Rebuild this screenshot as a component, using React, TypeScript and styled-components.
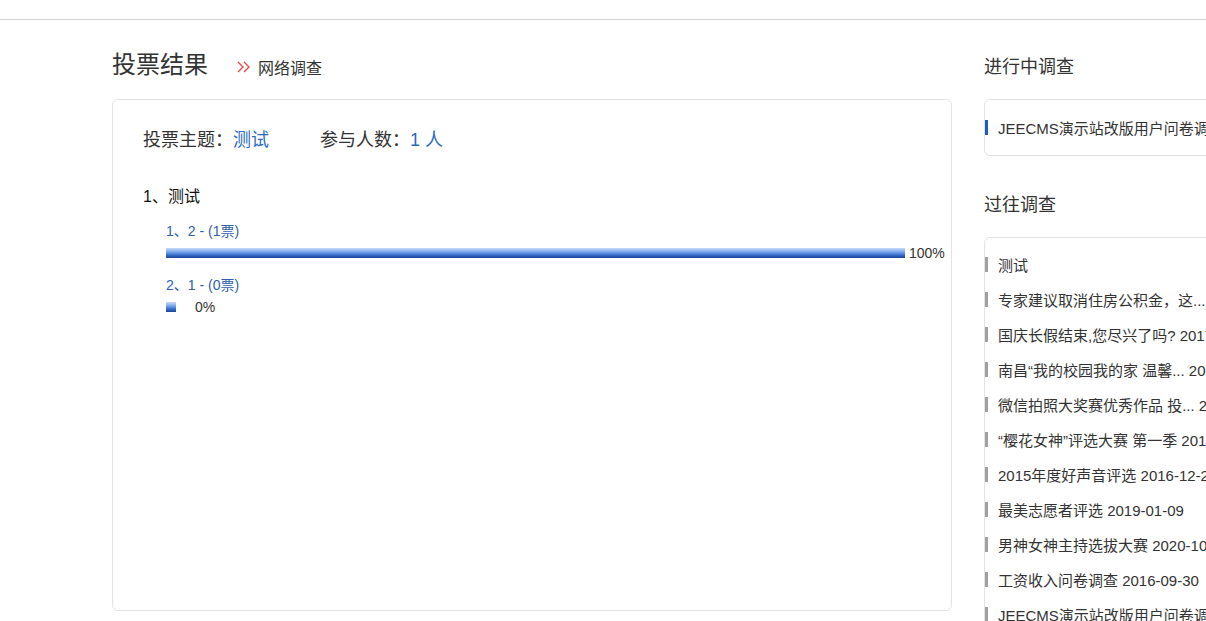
import styled, { createGlobalStyle } from "styled-components";

const GlobalStyle = createGlobalStyle`
    html, body {
        margin: 0;
        padding: 0;
        background: #fff;
        overflow-x: hidden;
    }
    body {
        font-family: "Liberation Sans", "Noto Sans CJK SC", sans-serif;
        color: #333;
    }
`;

const TopBar = styled.div`
    height: 19px;
    border-bottom: 1px solid #d2d2d2;
`;

const Main = styled.div`
    margin-left: 112px;
    width: 1180px;
    display: flex;
    gap: 32px;
    align-items: flex-start;
`;

const LeftColumn = styled.div`
    width: 840px;
    flex-shrink: 0;
`;

const TitleRow = styled.div`
    padding-top: 30px;
    height: 30px;
    margin-bottom: 19px;
    display: flex;
    align-items: center;
`;

const PageTitle = styled.h1`
    margin: 0;
    font-size: 24px;
    font-weight: normal;
    line-height: 30px;
    color: #333;
`;

const Crumb = styled.div`
    margin-left: 29px;
    display: flex;
    align-items: center;
    gap: 7px;
    font-size: 16px;
    color: #333;
    padding-top: 3px;
`;

const Card = styled.div<{ $height?: number }>`
    border: 1px solid #e3e3e3;
    border-radius: 6px;
    box-sizing: border-box;
    background: #fff;
    ${(p) => (p.$height ? `height: ${p.$height}px;` : "")}
`;

const ResultBody = styled.div`
    padding: 28px 30px 0 30px;
`;

const SubjectRow = styled.div`
    display: flex;
    gap: 51px;
    font-size: 18px;
    line-height: 24px;
    color: #333;
`;

const Blue = styled.span`
    color: #2b6cc4;
`;

const Question = styled.div`
    margin-top: 35px;
    font-size: 16px;
    line-height: 20px;
    color: #111;
`;

const OptionList = styled.div`
    padding-left: 23px;
`;

const Option = styled.div`
    margin-top: 15px;
    & + & {
        margin-top: 18px;
    }
`;

const OptionLabel = styled.div`
    font-size: 14px;
    line-height: 18px;
    color: #2f5fae;
`;

const BarRow = styled.div`
    margin-top: 8px;
    height: 10px;
    display: flex;
    align-items: center;
`;

const Bar = styled.div`
    height: 10px;
    flex-shrink: 0;
    background: linear-gradient(
        #c6dafa 0%,
        #8db4ef 30%,
        #4b80d8 60%,
        #2a5fbf 80%,
        #1b4592 100%
    );
`;

const Percent = styled.span<{ $empty?: boolean }>`
    margin-left: ${(p) => (p.$empty ? 19 : 4)}px;
    font-size: 14px;
    line-height: 10px;
    color: #333;
`;

const RightColumn = styled.div`
    width: 300px;
    flex-shrink: 0;
`;

const SideHeading = styled.h2<{ $first?: boolean }>`
    margin: ${(p) => (p.$first ? "32px" : "34px")} 0 17px 0;
    font-size: 18px;
    font-weight: normal;
    line-height: 30px;
    color: #333;
`;

const SideList = styled.ul<{ $pad: number }>`
    list-style: none;
    margin: 0;
    padding: ${(p) => p.$pad}px 0;
`;

const SideItem = styled.li<{ $active?: boolean; $h: number }>`
    height: ${(p) => p.$h}px;
    display: flex;
    align-items: center;
    font-size: 15px;
    color: #333;
    white-space: nowrap;
    &::before {
        content: "";
        width: 3px;
        height: 15px;
        margin-right: 10px;
        flex-shrink: 0;
        background: ${(p) => (p.$active ? "#1d5fb8" : "#a0a0a0")};
    }
`;

const Chevrons = () => (
    <svg width="14" height="12" viewBox="0 0 14 12" fill="none">
        <path d="M1 1 L6 6 L1 11" stroke="#e8474c" strokeWidth="1.4" />
        <path d="M7 1 L12 6 L7 11" stroke="#e8474c" strokeWidth="1.4" />
    </svg>
);

const options = [
    { label: "1、2 - (1票)", percent: 100 },
    { label: "2、1 - (0票)", percent: 0 },
];

const pastSurveys = [
    "测试",
    "专家建议取消住房公积金，这... 2016-10-18",
    "国庆长假结束,您尽兴了吗? 2017-10-09",
    "南昌“我的校园我的家 温馨... 2016-11-20",
    "微信拍照大奖赛优秀作品 投... 2016-12-01",
    "“樱花女神”评选大赛 第一季 2017-03-15",
    "2015年度好声音评选 2016-12-20",
    "最美志愿者评选 2019-01-09",
    "男神女神主持选拔大赛 2020-10-12",
    "工资收入问卷调查 2016-09-30",
    "JEECMS演示站改版用户问卷调查",
];

const App = () => {
    return (
        <>
            <GlobalStyle />
            <TopBar />
            <Main>
                <LeftColumn>
                    <TitleRow>
                        <PageTitle>投票结果</PageTitle>
                        <Crumb>
                            <Chevrons />
                            网络调查
                        </Crumb>
                    </TitleRow>
                    <Card $height={512}>
                        <ResultBody>
                            <SubjectRow>
                                <span>
                                    投票主题：<Blue>测试</Blue>
                                </span>
                                <span>
                                    参与人数：<Blue>1 人</Blue>
                                </span>
                            </SubjectRow>
                            <Question>1、测试</Question>
                            <OptionList>
                                {options.map((o) => (
                                    <Option key={o.label}>
                                        <OptionLabel>{o.label}</OptionLabel>
                                        <BarRow>
                                            <Bar
                                                style={{
                                                    width: Math.max(
                                                        (o.percent / 100) * 739,
                                                        10
                                                    ),
                                                }}
                                            />
                                            <Percent $empty={o.percent === 0}>
                                                {o.percent}%
                                            </Percent>
                                        </BarRow>
                                    </Option>
                                ))}
                            </OptionList>
                        </ResultBody>
                    </Card>
                </LeftColumn>
                <RightColumn>
                    <SideHeading $first>进行中调查</SideHeading>
                    <Card>
                        <SideList $pad={0}>
                            <SideItem $active $h={55}>
                                JEECMS演示站改版用户问卷调查
                            </SideItem>
                        </SideList>
                    </Card>
                    <SideHeading>过往调查</SideHeading>
                    <Card>
                        <SideList $pad={9}>
                            {pastSurveys.map((s) => (
                                <SideItem key={s} $h={35}>
                                    {s}
                                </SideItem>
                            ))}
                        </SideList>
                    </Card>
                </RightColumn>
            </Main>
        </>
    );
};

export default App;
